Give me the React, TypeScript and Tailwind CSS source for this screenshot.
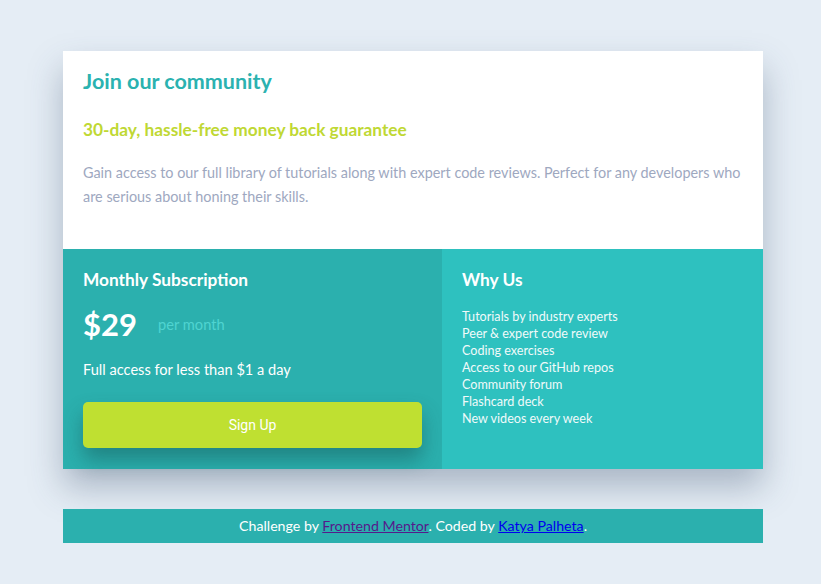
import React from "react";

const features = [
  "Tutorials by industry experts",
  "Peer & expert code review",
  "Coding exercises",
  "Access to our GitHub repos",
  "Community forum",
  "Flashcard deck",
  "New videos every week",
];

export default function App() {
  return (
    <div
      className="min-h-[584px] w-full bg-[#e5edf5] pt-[51px] pb-[41px] pl-[63px]"
      style={{ fontFamily: '"Lato", "Liberation Sans", sans-serif' }}
    >
      <div className="w-[700px] shadow-[0_18px_32px_rgba(60,80,110,0.35)]">
        <div className="bg-white px-5 pt-[18px] pb-[40px]">
          <h1 className="text-[21.5px] font-bold leading-[24px] text-[#2bb2b0]">Join our community</h1>
          <h2 className="mt-[27px] text-[17.3px] font-bold leading-[20px] text-[#bfd834]">
            30-day, hassle-free money back guarantee
          </h2>
          <p className="mt-[21px] text-[14.4px] leading-[24px] text-[#9ea8bf]">
            Gain access to our full library of tutorials along with expert code reviews. Perfect for any developers who
            are serious about honing their skills.
          </p>
        </div>
        <div className="flex">
          <div className="w-[379px] bg-[#2bb0ae] px-5 pt-[21px] pb-[21px]">
            <h3 className="text-[17.3px] font-bold leading-[20px] text-white">Monthly Subscription</h3>
            <div className="mt-[16px] flex items-center">
              <span className="text-[31px] font-bold leading-[36px] text-white">$29</span>
              <span className="ml-[21px] text-[14.7px] text-[#4fd4d1]">per month</span>
            </div>
            <p className="mt-[18px] text-[14.6px] leading-[20px] text-white">Full access for less than $1 a day</p>
            <button
              className="mt-[22px] h-[46px] w-full rounded-[5px] bg-[#bfe031] text-[14px] text-white shadow-[0_12px_20px_rgba(20,80,80,0.45)]"
              style={{ fontFamily: 'Roboto, "Liberation Sans", sans-serif' }}
            >
              Sign Up
            </button>
          </div>
          <div className="flex-1 bg-[#2ec1bf] px-5 pt-[21px]">
            <h3 className="text-[17.3px] font-bold leading-[20px] text-white">Why Us</h3>
            <ul className="mt-[18px] text-[12.6px] leading-[17px] text-[#f0fafa]">
              {features.map((f) => (
                <li key={f}>{f}</li>
              ))}
            </ul>
          </div>
        </div>
      </div>
      <div className="mt-[40px] flex h-[34px] w-[700px] items-center justify-center bg-[#2bb0ae] text-[14.2px] text-white">
        <span>
          Challenge by{" "}
          <a href="#" className="text-[#551a8b] underline">
            Frontend Mentor
          </a>
          . Coded by{" "}
          <a href="#" className="text-[#0000ee] underline">
            Katya Palheta
          </a>
          .
        </span>
      </div>
    </div>
  );
}
